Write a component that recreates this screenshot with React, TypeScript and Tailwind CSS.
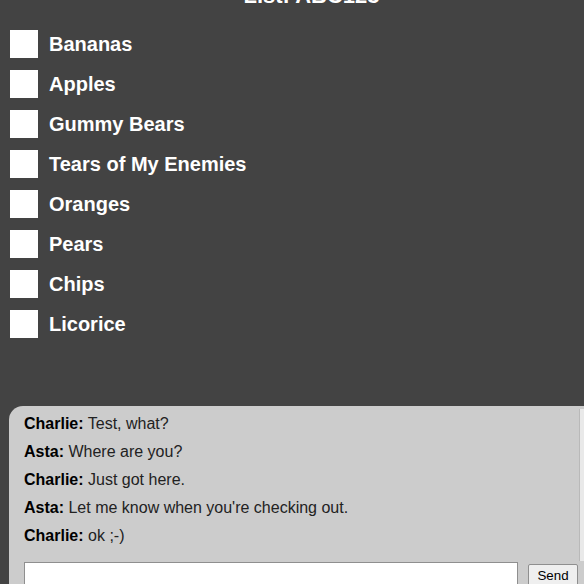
import { useState } from "react";

const items = [
  "Bananas",
  "Apples",
  "Gummy Bears",
  "Tears of My Enemies",
  "Oranges",
  "Pears",
  "Chips",
  "Licorice",
];

const messages = [
  { from: "Charlie", text: "Test, what?" },
  { from: "Asta", text: "Where are you?" },
  { from: "Charlie", text: "Just got here." },
  { from: "Asta", text: "Let me know when you're checking out." },
  { from: "Charlie", text: "ok ;-)" },
];

export default function App() {
  const [draft, setDraft] = useState("");

  return (
    <div className="w-[584px] h-[584px] overflow-hidden bg-[#434343] font-['Liberation_Sans',Arial,sans-serif]">
      <div className="w-[623px]">
        {/* List title, scrolled mostly out of view */}
        <h1 className="mt-[-17px] text-center text-[22px] leading-[26px] font-bold text-white">
          List: ABC123
        </h1>

        {/* Shopping list */}
        <ul className="mt-[15px] pl-[10px]">
          {items.map((item) => (
            <ListItem key={item} label={item} />
          ))}
        </ul>

        {/* Chat panel */}
        <section className="mt-[62px] ml-[9px] mr-[9px] h-[200px] rounded-tl-[14px] bg-[#cccccc] pt-[3px]">
          <div className="flex h-[152px] w-[587px]">
            <div className="flex-1 overflow-hidden pt-[1px] pl-[15px] text-[16px] text-[#222]">
              {messages.map((m, i) => (
                <div key={i} className="h-[28px] leading-[28px]">
                  <span className="font-bold text-black">{m.from}:</span> {m.text}
                </div>
              ))}
            </div>
            {/* scroll track */}
            <div className="w-[17px] border-l border-[#b9b9b9] bg-[#e9e9e9]" />
          </div>
          <div className="mt-[1px] flex items-start pl-[15px]">
            <input
              value={draft}
              onChange={(e) => setDraft(e.target.value)}
              className="h-[26px] w-[494px] border border-[#8f8f8f] bg-white px-1 text-[14px] outline-none"
            />
            <button className="ml-[10px] mt-[2px] h-[24px] w-[50px] rounded-[2px] border border-[#8f8f8f] bg-[#efefef] text-[13.33px] leading-[20px] text-black">
              Send
            </button>
          </div>
        </section>
      </div>
    </div>
  );
}

function ListItem({ label }: { label: string }) {
  const [checked, setChecked] = useState(false);
  return (
    <li className="flex h-[40px] items-center">
      <button
        onClick={() => setChecked(!checked)}
        className="h-[28px] w-[28px] shrink-0 bg-white"
      />
      <span className="ml-[11px] text-[20px] font-bold text-white">{label}</span>
    </li>
  );
}
